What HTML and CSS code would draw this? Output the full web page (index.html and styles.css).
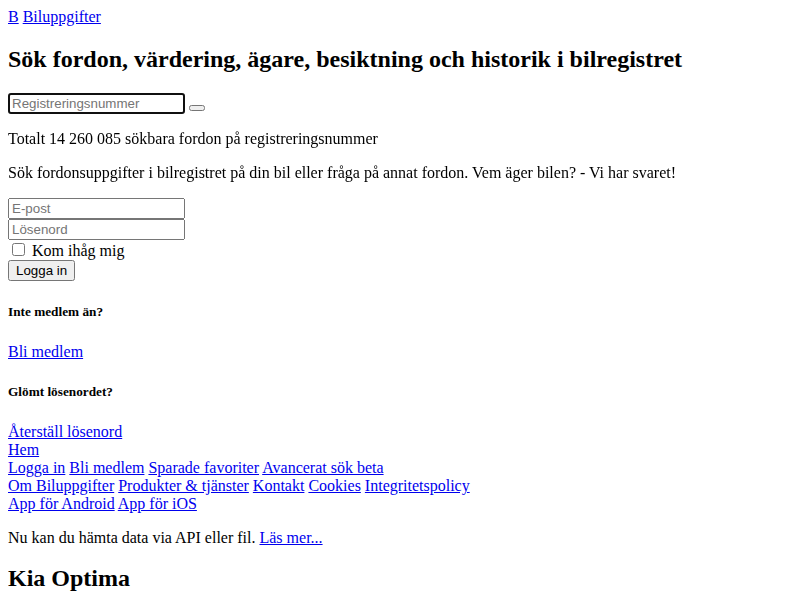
FILE: index.html
```html
<!DOCTYPE html>
<html lang="sv">
<head>
<meta charset="utf-8">
<title>Biluppgifter</title>
<link rel="stylesheet" href="styles.css">
</head>
<body>
<div class="brand"><a href="#">B</a> <a href="#">Biluppgifter</a></div>
<h1 class="title">Sök fordon, värdering, ägare, besiktning och historik i bilregistret</h1>
<form class="search">
<input type="text" class="reg" placeholder="Registreringsnummer" autofocus> <button type="submit" class="go"></button>
</form>
<p>Totalt 14 260 085 sökbara fordon på registreringsnummer</p>
<p>Sök fordonsuppgifter i bilregistret på din bil eller fråga på annat fordon. Vem äger bilen? - Vi har svaret!</p>
<form class="login">
<input type="email" class="field" placeholder="E-post">
<input type="password" class="field" placeholder="Lösenord">
<label class="remember"><input type="checkbox"> Kom ihåg mig</label>
<button type="submit" class="btn">Logga in</button>
</form>
<h5 class="sub">Inte medlem än?</h5>
<p><a href="#">Bli medlem</a></p>
<h5 class="sub">Glömt lösenordet?</h5>
<p class="tight"><a href="#">Återställ lösenord</a></p>
<div><a href="#">Hem</a></div>
<div><a href="#">Logga in</a> <a href="#">Bli medlem</a> <a href="#">Sparade favoriter</a> <a href="#">Avancerat sök beta</a></div>
<div><a href="#">Om Biluppgifter</a> <a href="#">Produkter &amp; tjänster</a> <a href="#">Kontakt</a> <a href="#">Cookies</a> <a href="#">Integritetspolicy</a></div>
<div><a href="#">App för Android</a> <a href="#">App för iOS</a></div>
<p>Nu kan du hämta data via API eller fil. <a href="#">Läs mer...</a></p>
<h1 class="car">Kia Optima</h1>
</body>
</html>
```
FILE: styles.css
```css
body {
  font-family: "Liberation Serif", "Times New Roman", serif;
}
.title,
.car {
  font-size: 1.5em;
  margin: 0.83em 0;
}
.car {
  margin-top: 18px;
}
.sub {
  margin: 23.5px 0 22.5px;
}
input, button {
  font-family: "Liberation Sans", Arial, sans-serif;
}
.reg,
.field {
  box-sizing: border-box;
  width: 177px;
}
.field {
  display: block;
}
.remember {
  display: block;
}
.btn {
  display: block;
}
.tight {
  margin-bottom: 0;
}
```
